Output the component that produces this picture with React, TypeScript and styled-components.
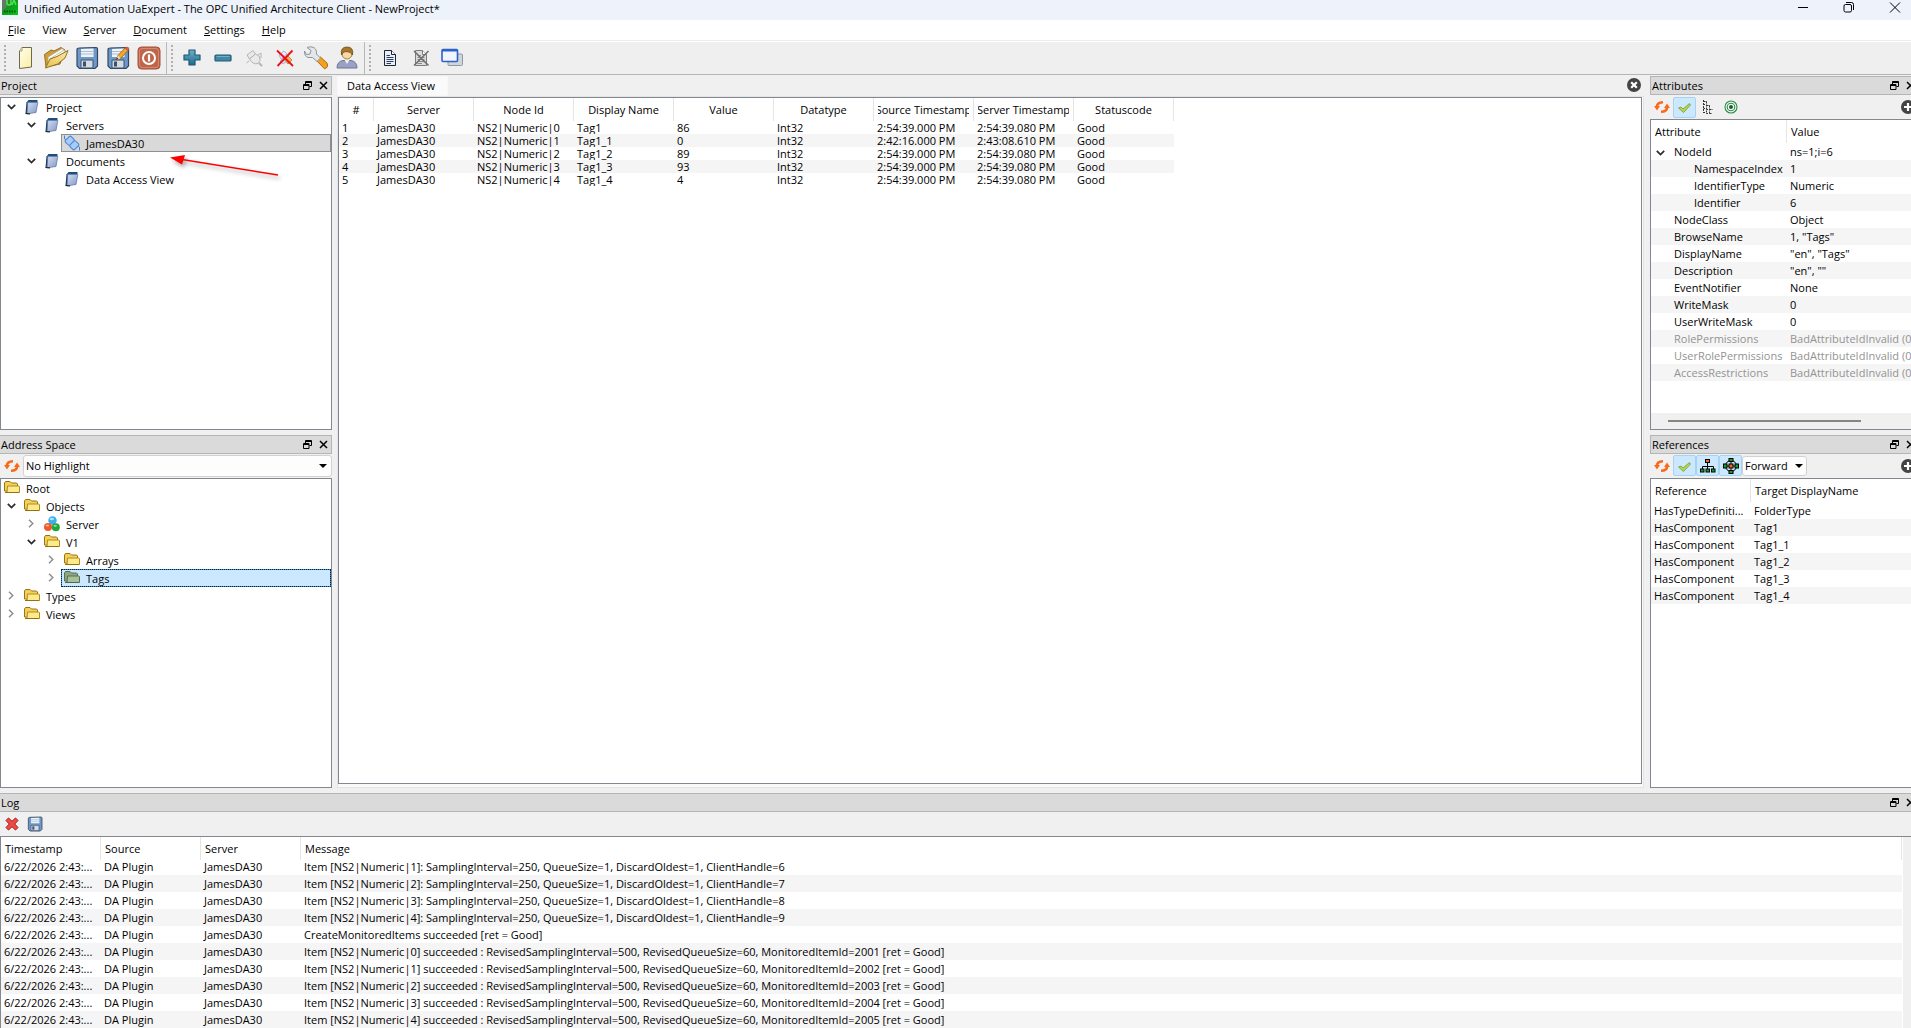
import React from "react";
import styled, { createGlobalStyle, css } from "styled-components";

const FONT = '"Open Sans", "Noto Sans", "Liberation Sans", sans-serif';
const FRAME = "#828790";

const GlobalStyle = createGlobalStyle`
  *, *::before, *::after { box-sizing: border-box; }
  body { margin: 0; background: #f0f0f0; }
  body, button, select, table { font-family: ${FONT}; font-size: 11px; line-height: 17px; color: #000; }
  button { margin: 0; padding: 0; border: 0; background: transparent; }
  svg { display: block; flex: none; }
`;

/* ---------- window shell ---------- */

const Window = styled.div`
  position: relative;
  display: flex;
  flex-direction: column;
  height: 100vh;
  overflow: hidden;
`;

/* The window is wider than the visible screen by a few pixels on the right. */
const Surface = styled.div`
  display: flex;
  flex-direction: column;
  flex: 1;
  min-height: 0;
  margin-right: -10px;
`;

const TitleBar = styled.header`
  display: flex;
  flex: none;
  height: 20px;
  padding: 0 3px 0 2px;
  background: #eef3fb;
`;

const WindowTitle = styled.h1`
  flex: 1;
  margin: 0 0 0 6px;
  font-size: 11px;
  line-height: 17px;
  font-weight: 400;
`;

const WindowButton = styled.button`
  display: flex;
  justify-content: center;
  width: 46px;
  height: 20px;
`;

const MenuBar = styled.nav`
  display: flex;
  flex: none;
  height: 21px;
  background: #fff;
  border-bottom: 1px solid #ececec;
`;

const MenuButton = styled.button`
  padding: 0 9px 0 8px;
  line-height: 20px;
`;

const Toolbars = styled.div`
  display: flex;
  flex: none;
  height: 34px;
  background: #efefef;
  border-top: 1px solid #fff;
  border-bottom: 1px solid #b5b5b5;
`;

const ToolGroup = styled.div<{ $last?: boolean }>`
  display: flex;
  align-items: center;
  padding: 0 2px 0 4px;
  border-right: ${(p) => (p.$last ? "0" : "1px solid #b9b9b9")};
`;

const Grip = styled.span`
  width: 5px;
  height: 26px;
  background: radial-gradient(circle at 1px 1px, #b0b0b0 1px, transparent 1px) 0 0 / 5px 4px repeat-y;
`;

const ToolButton = styled.button`
  display: flex;
  align-items: center;
  justify-content: center;
  width: 31px;
  height: 30px;
`;

const Workspace = styled.main`
  display: grid;
  grid-template-columns: 332px minmax(0, 1fr) 271px;
  flex: 1;
  min-height: 0;
  padding: 1px 0 5px;
`;

/* ---------- dock panels ---------- */

const DockColumn = styled.div`
  display: grid;
  grid-template-rows: minmax(0, 1fr) minmax(0, 1fr);
  gap: 5px;
  min-height: 0;
`;

const Panel = styled.section`
  display: flex;
  flex-direction: column;
  min-height: 0;
  min-width: 0;
`;

const PanelHeader = styled.div<{ $edge?: boolean; $boxed?: boolean }>`
  display: flex;
  align-items: center;
  flex: none;
  gap: 4px;
  height: 19px;
  padding: 0 ${(p) => (p.$edge ? 4 : 2)}px 0 1px;
  background: #dadada;
  border: 1px solid #b5b5b5;
  border-left-width: ${(p) => (p.$boxed ? 1 : 0)}px;
`;

const PanelTitle = styled.h2`
  flex: 1;
  margin: 0;
  font-size: 11px;
  line-height: 17px;
  font-weight: 400;
`;

const PanelButton = styled.button`
  display: flex;
  align-items: center;
  justify-content: center;
  width: 12px;
  height: 12px;
`;

const PanelTools = styled.div`
  display: flex;
  align-items: center;
  flex: none;
  height: 24px;
`;

const Frame = styled.div<{ $gap?: boolean }>`
  display: flex;
  flex-direction: column;
  flex: 1;
  min-height: 0;
  margin-top: ${(p) => (p.$gap ? "2px" : "0")};
  overflow: hidden;
  background: #fff;
  border: 1px solid ${FRAME};
`;

const Toggle = styled.button<{ $on?: boolean }>`
  display: flex;
  align-items: center;
  justify-content: center;
  width: 23px;
  height: 21px;
  border-radius: 2px;
  ${(p) => p.$on && css`
    background: #cce8ff;
    border: 1px solid #a6d2f5;
  `}
`;

const Spacer = styled.span`
  flex: 1;
`;

const RoundButton = styled.button`
  width: 14px;
  height: 14px;
  margin-right: 6px;
`;

const Picker = styled.label<{ $grow?: boolean }>`
  position: relative;
  display: flex;
  flex: ${(p) => (p.$grow ? "1" : "none")};
  width: ${(p) => (p.$grow ? "auto" : "65px")};
  height: ${(p) => (p.$grow ? "22px" : "20px")};
`;

const PickerSelect = styled.select`
  appearance: none;
  width: 100%;
  height: 100%;
  padding: 0 14px 0 2px;
  background: #fdfdfd;
  border: 1px solid #d2d2d2;
  border-radius: 3px;
`;

const PickerArrow = styled.span<{ $inset: number }>`
  position: absolute;
  top: 50%;
  right: ${(p) => p.$inset}px;
  margin-top: -2px;
  border: 4px solid transparent;
  border-top-color: #000;
  border-bottom: 0;
  pointer-events: none;
`;

/* ---------- trees ---------- */

const Tree = styled.ul`
  margin: 0;
  padding: 0;
  list-style: none;
`;

const TreeRow = styled.li<{ $indent: number }>`
  display: flex;
  height: 18px;
  padding-left: ${(p) => p.$indent}px;
`;

const Expander = styled.button`
  display: flex;
  align-items: center;
  justify-content: center;
  width: 20px;
  height: 18px;
`;

const TreeLabel = styled.span<{ $state?: "active" | "inactive" }>`
  display: flex;
  align-items: center;
  flex: 1;
  gap: 6px;
  padding-left: 2px;
  border: 1px solid transparent;
  ${(p) => p.$state === "inactive" && css`
    background: #d9d9d9;
    border-color: #8e8f93;
  `}
  ${(p) => p.$state === "active" && css`
    background: linear-gradient(#cce8ff, #cce8ff) padding-box, #2a8fe0 border-box;
    border: 1px dotted #10202e;
  `}
`;

const TreeText = styled.span`
  padding-top: 1px;
  line-height: 15px;
`;

/* ---------- tables ---------- */

const Sheet = styled.table<{ $width?: number }>`
  width: ${(p) => (p.$width ? `${p.$width}px` : "100%")};
  table-layout: fixed;
  border-collapse: separate;
  border-spacing: 0;
`;

const Column = styled.col<{ $w?: number }>`
  width: ${(p) => (p.$w ? `${p.$w}px` : "auto")};
`;

const Head = styled.th<{ $center?: boolean; $bare?: boolean }>`
  height: 23px;
  padding: 0 4px;
  font-weight: 400;
  text-align: ${(p) => (p.$center ? "center" : "left")};
  white-space: nowrap;
  border-right: ${(p) => (p.$bare ? "0" : "1px solid #e5e5e5")};
`;

const ClippedHead = styled.span`
  display: flex;
  justify-content: center;
  overflow: hidden;
`;

const Row = styled.tr<{ $h: number; $muted?: boolean }>`
  height: ${(p) => p.$h}px;
  color: ${(p) => (p.$muted ? "#939393" : "#000")};
  line-height: ${(p) => p.$h}px;
  &:nth-child(even) { background: #f5f5f5; }
`;

const Cell = styled.td<{ $inset?: number }>`
  height: inherit;
  padding: 0 0 0 ${(p) => p.$inset ?? 3}px;
  overflow: hidden;
  white-space: nowrap;
`;

const InlineExpander = styled.button`
  display: inline-flex;
  width: 18px;
  vertical-align: middle;
`;

const ScrollTrack = styled.div`
  flex: none;
  height: 16px;
  margin-top: auto;
  padding: 7px 59px 0 17px;
  background: #f0f0f0;
`;

const ScrollThumb = styled.div`
  height: 2px;
  background: #868686;
`;

/* ---------- document area ---------- */

const Documents = styled.section`
  display: flex;
  flex-direction: column;
  min-width: 0;
  min-height: 0;
  padding: 0 6px 0 5px;
`;

const TabStrip = styled.div`
  display: flex;
  align-items: center;
  justify-content: space-between;
  flex: none;
  height: 20px;
  padding-right: 3px;
`;

const Tab = styled.button`
  height: 20px;
  padding: 0 12px 2px 9px;
  background: #fafafa;
  border: 1px solid #f7f7f7;
`;

const CloseTab = styled.button`
  padding-bottom: 2px;
`;

const TabPage = styled.div`
  display: flex;
  flex: 1;
  min-height: 0;
  padding: 0 1px 3px 0;
  background: #f9f9f9;
  border: 1px solid #e4e4e4;
`;

/* ---------- log ---------- */

const LogPanel = styled.section`
  display: flex;
  flex-direction: column;
  flex: none;
  height: 235px;
`;

const LogBody = styled.div`
  display: flex;
  flex: 1;
  min-height: 0;
  background: #fff;
  border: 1px solid ${FRAME};
  border-width: 1px 0 0 1px;
`;

const LogScroll = styled.div`
  flex: 1;
  overflow: hidden;
`;

/* The list is scrolled slightly, so its first row is partly under the heading. */
const LogRow = styled(Row)`
  &:first-child { height: 15px; line-height: 13px; }
  &:first-child td { vertical-align: top; }
`;

const LogTrack = styled.div`
  display: flex;
  align-items: flex-end;
  justify-content: center;
  width: 18px;
  margin-left: 1px;
  padding-bottom: 17px;
  background: #f0f0f0;
`;

const LogThumb = styled.div`
  width: 2px;
  height: 18px;
  background: #868686;
`;

const Callout = styled.svg`
  position: absolute;
  left: 167px;
  top: 150px;
  filter: drop-shadow(2px 3px 2px rgba(0, 0, 0, 0.35));
  pointer-events: none;
`;

/* ---------- icons ---------- */

const AppIcon = () => (
  <svg width="16" height="15" viewBox="0 0 16 15">
    <defs>
      <linearGradient id="appGreen" x1="0" y1="0" x2="1" y2="1">
        <stop offset="0" stopColor="#5d6b5d" />
        <stop offset="0.45" stopColor="#0f9a1c" />
        <stop offset="1" stopColor="#04c814" />
      </linearGradient>
    </defs>
    <rect width="16" height="15" fill="url(#appGreen)" />
    <path d="M0 0H5V7L0 11Z" fill="#6f7a70" opacity="0.7" />
    <path d="M5 0V3Q5 5 7 5T9 3V0M10 5L12 0L14 5" stroke="#4bea57" strokeWidth="1.4" fill="none" />
    <path d="M2 11.500H14" stroke="#055a0c" strokeWidth="2" strokeDasharray="1.500 1" />
  </svg>
);

const MinimizeIcon = () => (
  <svg width="12" height="15" viewBox="0 0 12 15"><path d="M1 7.500H11" stroke="#000" /></svg>
);
const RestoreIcon = () => (
  <svg width="12" height="15" viewBox="0 0 12 15" fill="none" stroke="#000">
    <rect x="1" y="4.500" width="7.500" height="7.500" rx="1.500" />
    <path d="M3 2.500H8.500Q10.500 2.500 10.500 4.500V10" />
  </svg>
);
const CloseWindowIcon = () => (
  <svg width="12" height="15" viewBox="0 0 12 15"><path d="M1 2.500L11 12.500M11 2.500L1 12.500" stroke="#000" /></svg>
);

const NewIcon = () => (
  <svg width="24" height="24" viewBox="0 0 24 24">
    <defs>
      <linearGradient id="paper" x1="0" y1="0" x2="1" y2="1">
        <stop offset="0" stopColor="#fffef0" />
        <stop offset="1" stopColor="#fbeea0" />
      </linearGradient>
    </defs>
    <path d="M9 1.500H18.500V21L6.500 22.500V5Z" fill="url(#paper)" stroke="#6f6a4a" />
    <path d="M9 1.500V5H6.500" fill="#fff" stroke="#a39a62" />
  </svg>
);

const OpenIcon = () => (
  <svg width="26" height="24" viewBox="0 0 26 24">
    <defs>
      <linearGradient id="flap" x1="0" y1="1" x2="1" y2="0">
        <stop offset="0" stopColor="#e9c250" />
        <stop offset="1" stopColor="#fbe9a4" />
      </linearGradient>
    </defs>
    <path d="M1.500 8.500L8 4L11 5L18 1.500L22 4L17 18L3 21Z" fill="#cf9f33" stroke="#94701f" />
    <path d="M5 11L19 2.500L22.500 5L12 17L5 19Z" fill="#fdfdf8" stroke="#a8a08a" strokeWidth="0.800" />
    <path d="M6 13.500L21 4" stroke="#b9b4a0" strokeWidth="0.800" />
    <path d="M2.500 22L7 13L14 10.500L25 4.500L22 12L14.500 18Z" fill="url(#flap)" stroke="#94701f" />
  </svg>
);

const Disk = ({ size }: { size: number }) => (
  <svg width={size} height={size} viewBox="0 0 24 24">
    <path d="M2 4Q2 2 4 2L21 1.500Q22.500 1.500 22.500 3V20L20 22.500H4.500L2 20Z" fill="#6f98ca" stroke="#34465f" strokeWidth="1.200" />
    <path d="M6 3L18.500 2.600V11H6Z" fill="#eef3f8" />
    <path d="M6 5.500H18.500M6 8H18.500" stroke="#aebccb" />
    <path d="M6 14H18V22H6Z" fill="#d5dbe2" stroke="#38506f" />
    <path d="M8 15.500H11V20.500H8Z" fill="#39516e" />
  </svg>
);

const SaveAsIcon = () => (
  <svg width="24" height="24" viewBox="0 0 24 24">
    <path d="M2 4Q2 2 4 2L21 1.500Q22.500 1.500 22.500 3V20L20 22.500H4.500L2 20Z" fill="#6f98ca" stroke="#34465f" strokeWidth="1.200" />
    <path d="M6 3L18.500 2.600V11H6Z" fill="#eef3f8" />
    <path d="M6 5.500H16M6 8H14" stroke="#aebccb" />
    <path d="M6 14H18V22H6Z" fill="#d5dbe2" stroke="#38506f" />
    <path d="M8 15.500H11V20.500H8Z" fill="#39516e" />
    <path d="M10 14L12 9.500L19 2L22 4.500L14.500 12.500Z" fill="#f4a82c" stroke="#8a5a12" strokeWidth="0.800" />
    <path d="M19 2L20.500 0.500L23.500 3L22 4.500Z" fill="#e2564e" />
    <path d="M10 14L12 9.500L14.500 12.500Z" fill="#f6dcae" />
    <path d="M10 14L11 11.600L12.400 12.900Z" fill="#222" />
  </svg>
);

const PowerIcon = () => (
  <svg width="24" height="24" viewBox="0 0 24 24">
    <rect x="1" y="1" width="22" height="22" rx="3.500" fill="#c1654a" stroke="#a8523b" />
    <rect x="2.500" y="2.500" width="19" height="19" rx="2.500" fill="none" stroke="#d08a74" />
    <circle cx="12" cy="12" r="6" fill="none" stroke="#fff" strokeWidth="2" />
    <path d="M12 8.500V15.500" stroke="#fff" strokeWidth="2.200" />
  </svg>
);

const PlusIcon = () => (
  <svg width="20" height="20" viewBox="0 0 20 20">
    <defs>
      <linearGradient id="teal" x1="0" y1="0" x2="0" y2="1">
        <stop offset="0" stopColor="#6fb0c9" />
        <stop offset="1" stopColor="#22688a" />
      </linearGradient>
    </defs>
    <path d="M7 2H13V7H18V12H13V17H7V12H2V7H7Z" fill="url(#teal)" stroke="#1f5a78" strokeWidth="1.200" strokeLinejoin="round" />
  </svg>
);
const MinusIcon = () => (
  <svg width="20" height="20" viewBox="0 0 20 20">
    <rect x="2" y="7" width="16" height="6" rx="1" fill="#4586a3" stroke="#1f5a78" strokeWidth="1.200" />
    <path d="M3.500 8.500H16.500" stroke="#6fb0c9" />
  </svg>
);
const PlugIcon = () => (
  <svg width="20" height="20" viewBox="0 0 20 20" fill="#e9e9e9" stroke="#b4b4b4">
    <path d="M15 15L18 18" fill="none" strokeWidth="2" />
    <path d="M3 7L9 2.500L11.500 6L5.500 11Z" />
    <path d="M5.500 11L11.500 6L15.500 8.500Q17.500 13 14 15.500Q9 17 5.500 11Z" />
    <path d="M14 7L17 5V10M5 13L2.500 15" fill="none" />
  </svg>
);
const DisconnectIcon = () => (
  <svg width="20" height="20" viewBox="0 0 20 20">
    <path d="M4 7L9 3L12 6L6 11Z" fill="#e3e8fb" stroke="#aab4de" />
    <path d="M9 11L13 8L17 12L13 16Z" fill="#f4b25a" stroke="#c98a3a" />
    <path d="M5 13L8 10L11 14L8 16Z" fill="#d5dcf8" stroke="#aab4de" />
    <path d="M2 2.500L18 18M17.500 2.500L2.500 18" stroke="#f00f0f" strokeWidth="1.800" fill="none" />
  </svg>
);
const WrenchIcon = () => (
  <svg width="26" height="24" viewBox="0 0 26 24">
    <path d="M13.500 14.500L17.500 11L24 17Q26 21.500 21.500 22.800Z" fill="#f3a01f" stroke="#b06c10" />
    <path d="M4 1.500L8 4.500L7 8L3.500 8.500L1.500 5Q1 10 5 11.500L9.500 11.500L14 15.500L17.500 12L13.500 8Q14 2 9 1Q6 0.500 4 1.500Z" fill="#e3e6ea" stroke="#8d949d" />
  </svg>
);
const UserIcon = () => (
  <svg width="24" height="24" viewBox="0 0 24 24">
    <path d="M2 22Q2 15.500 8 14.500H16Q22 15.500 22 22Z" fill="#9aa2c4" stroke="#6d7598" />
    <path d="M9 13H15L12 18Z" fill="#f2f2f6" />
    <circle cx="12" cy="8" r="5" fill="#f6d9a8" stroke="#a9822f" />
    <path d="M6.500 9Q5 1 12 1Q19 1 17.500 9Q16 5.500 11 5.500Q8 5.500 6.500 9Z" fill="#a8752a" stroke="#6f4a12" strokeWidth="0.800" />
  </svg>
);
const DocumentIcon = ({ off }: { off?: boolean }) => (
  <svg width="18" height="20" viewBox="0 0 18 20">
    <path d="M3.500 2.500H10.500L14.500 6.500V17.500H3.500Z" fill={off ? "#dcdcdc" : "#e8effb"} stroke={off ? "#7c7c7c" : "#1d2533"} />
    <path d="M10.500 2.500V6.500H14.500" fill="#fff" stroke={off ? "#7c7c7c" : "#1d2533"} />
    <path d="M5.500 7.500H9M5.500 9.500H12.500M5.500 11.500H12.500M5.500 13.500H12.500M5.500 15.500H10" stroke={off ? "#8b8b8b" : "#2f3f58"} />
    {off && <path d="M2 3L16.500 17.500M16.500 3L2 17.500" stroke="#6e6e6e" strokeWidth="1.500" />}
  </svg>
);
const CascadeIcon = () => (
  <svg width="24" height="22" viewBox="0 0 24 22">
    <rect x="8" y="7" width="14.500" height="11.500" rx="1" fill="#cfd4dd" stroke="#9098a6" />
    <rect x="2" y="2.500" width="15.500" height="12" rx="1" fill="#f0f4ff" stroke="#2d62c8" strokeWidth="1.600" />
    <path d="M2 3.500H17.500" stroke="#2d62c8" strokeWidth="2" />
  </svg>
);

const FloatIcon = () => (
  <svg width="9" height="9" viewBox="0 0 9 9" fill="none" stroke="#000">
    <path d="M2.500 3V0.500H8.500V5.500H6.500M2.500 1.500H8.500" />
    <path d="M0.500 3.500H6V8.500H0.500ZM0.500 4.500H6" />
  </svg>
);
const CloseIcon = () => (
  <svg width="9" height="9" viewBox="0 0 9 9"><path d="M1 1L8 8M8 1L1 8" stroke="#000" strokeWidth="1.500" /></svg>
);

const NotebookIcon = () => (
  <svg width="16" height="16" viewBox="0 0 16 16">
    <defs>
      <linearGradient id="cover" x1="0" y1="0" x2="1" y2="1">
        <stop offset="0" stopColor="#d4def2" />
        <stop offset="1" stopColor="#7f97c8" />
      </linearGradient>
    </defs>
    <path d="M2.500 3.500L4.500 1H13.500V3.500Z" fill="#1d4f7e" />
    <path d="M2.500 3L4 3.500V14L1.500 14.500Z" fill="#173c66" />
    <path d="M3.800 3.500H13.800L12 13.500L3 14.800Z" fill="url(#cover)" stroke="#5a6f99" strokeWidth="0.700" />
    <path d="M1.500 14.500L6 14.800" stroke="#222" strokeWidth="1.200" />
  </svg>
);
const ConnectedIcon = () => (
  <svg width="16" height="16" viewBox="0 0 16 16" fill="#a5ccfa" stroke="#4c80d2">
    <path d="M0.500 0.500V4L2.500 5.500M15.500 15.500V12L13.500 10.500" fill="none" />
    <g transform="rotate(45 8 8)">
      <rect x="1.500" y="4" width="6.500" height="8" rx="1.500" />
      <rect x="8" y="4" width="6.500" height="8" rx="1.500" />
    </g>
  </svg>
);
const FolderIcon = ({ tinted }: { tinted?: boolean }) => (
  <svg width="16" height="16" viewBox="0 0 16 16">
    <path d="M0.500 11V3L1.500 1.500H6L7.500 3H12.500L13.500 4V12Z" fill={tinted ? "#8fa585" : "#f3cf5c"} stroke={tinted ? "#56704f" : "#9a7412"} />
    <path d="M3.500 6H14.500Q15.500 6 15.500 7V12.500H3Z" fill={tinted ? "#a9bf9a" : "#fdea8c"} stroke={tinted ? "#56704f" : "#b58a18"} />
    <path d="M1 12.500H15" stroke={tinted ? "#4f684a" : "#94700f"} />
  </svg>
);
const SpheresIcon = () => (
  <svg width="16" height="16" viewBox="0 0 16 16">
    <circle cx="8.500" cy="4.500" r="4.200" fill="#39aef0" />
    <circle cx="4" cy="11" r="4" fill="#ec5a2c" />
    <circle cx="11.800" cy="11.300" r="4" fill="#1fa53a" />
    <ellipse cx="7.800" cy="3" rx="2.200" ry="1.300" fill="#a7e0ff" />
    <ellipse cx="3.400" cy="9.500" rx="1.800" ry="1.100" fill="#ffb08e" />
    <ellipse cx="11.200" cy="9.800" rx="1.800" ry="1.100" fill="#7fe08f" />
  </svg>
);
const ChevronDown = () => (
  <svg width="9" height="6" viewBox="0 0 9 6"><path d="M0.800 0.800L4.500 4.500L8.200 0.800" fill="none" stroke="#2b2b2b" strokeWidth="1.700" /></svg>
);
const ChevronRight = () => (
  <svg width="6" height="9" viewBox="0 0 6 9"><path d="M1 0.800L4.800 4.500L1 8.200" fill="none" stroke="#8f8f8f" strokeWidth="1.500" /></svg>
);
const RefreshIcon = () => (
  <svg width="16" height="14" viewBox="0 0 16 14">
    <path d="M2.800 7Q3 2.200 9 2.200" fill="none" stroke="#f9691c" strokeWidth="2.600" />
    <path d="M0 6H6L3 10.500Z" fill="#f9691c" />
    <path d="M13.200 7Q13 11.800 7 11.800" fill="none" stroke="#f9691c" strokeWidth="2.600" />
    <path d="M10 8H16L13 3.500Z" fill="#f9691c" />
  </svg>
);
const CheckIcon = () => (
  <svg width="15" height="14" viewBox="0 0 15 14">
    <path d="M1.500 8L4 7L6 9L12.500 3.500L13.500 5L6.500 12.500Z" fill="#b5d94c" stroke="#7ea23a" strokeWidth="0.900" />
  </svg>
);
const SubtreeIcon = () => (
  <svg width="12" height="15" viewBox="0 0 12 15" fill="none" stroke="#333">
    <path d="M1.500 0V13M1.500 1.500H5M4.500 1.500V14M4.500 5.500H8M7.500 5.500V14M7.500 9.500H11M1.500 4.500H3M1.500 8.500H3M1.500 12.500H3M4.500 9.500H6M4.500 13.500H6M7.500 13.500H10" strokeDasharray="2 1" />
  </svg>
);
const TargetIcon = () => (
  <svg width="14" height="14" viewBox="0 0 14 14">
    <circle cx="7" cy="7" r="6" fill="#f4fbf5" stroke="#2c8c46" strokeWidth="1.100" />
    <circle cx="7" cy="7" r="3.800" fill="none" stroke="#2c8c46" strokeWidth="1.100" />
    <circle cx="7" cy="7" r="2" fill="#14602a" />
  </svg>
);
const HierarchyIcon = () => (
  <svg width="16" height="14" viewBox="0 0 16 14" stroke="#000">
    <path d="M7.500 4V7M2.500 10V7.500H13.500V10M7.500 7V10" fill="none" />
    <rect x="5.500" y="0.500" width="4" height="3" fill="#f26522" />
    <rect x="0.500" y="10" width="3.500" height="3" fill="#12a12d" />
    <rect x="6" y="10" width="3.500" height="3" fill="#12a12d" />
    <rect x="11.500" y="10" width="3.500" height="3" fill="#12a12d" />
  </svg>
);
const StarIcon = () => (
  <svg width="16" height="16" viewBox="0 0 16 16" stroke="#000">
    <circle cx="8" cy="8" r="5.500" fill="none" />
    <path d="M8 2V14M2 8H14" />
    <rect x="6" y="0.500" width="4" height="3" fill="#12a12d" />
    <rect x="6" y="12.500" width="4" height="3" fill="#12a12d" />
    <rect x="0.500" y="6" width="3.500" height="4" fill="#12a12d" />
    <rect x="12" y="6" width="3.500" height="4" fill="#12a12d" />
    <rect x="6" y="6" width="4" height="4" fill="#f26522" />
  </svg>
);
const RoundIcon = ({ kind }: { kind: "plus" | "close" }) => (
  <svg width="14" height="14" viewBox="0 0 14 14">
    <circle cx="7" cy="7" r="7" fill="#444" />
    <path d={kind === "plus" ? "M7 3V11M3 7H11" : "M4.200 4.200L9.800 9.800M9.800 4.200L4.200 9.800"} stroke="#fff" strokeWidth="2.200" />
  </svg>
);
const DeleteIcon = () => (
  <svg width="14" height="14" viewBox="0 0 14 14">
    <path d="M3.500 1L7 4.300L10.500 1L13 3.500L9.700 7L13 10.500L10.500 13L7 9.700L3.500 13L1 10.500L4.300 7L1 3.500Z" fill="#ee4b46" stroke="#a31515" />
  </svg>
);

/* ---------- data ---------- */

const MENUS: [string, string][] = [
  ["F", "ile"], ["", "View"], ["S", "erver"], ["D", "ocument"], ["S", "ettings"], ["H", "elp"],
];

const TOOL_GROUPS: [string, React.ReactNode][][] = [
  [
    ["New", <NewIcon />], ["Open", <OpenIcon />], ["Save", <Disk size={24} />],
    ["Save as", <SaveAsIcon />], ["Exit", <PowerIcon />],
  ],
  [
    ["Add server", <PlusIcon />], ["Remove server", <MinusIcon />], ["Connect", <PlugIcon />],
    ["Disconnect", <DisconnectIcon />], ["Server properties", <WrenchIcon />], ["Change user", <UserIcon />],
  ],
  [
    ["Add document", <DocumentIcon />], ["Remove document", <DocumentIcon off />], ["Windows", <CascadeIcon />],
  ],
];

type TreeNode = {
  label: string;
  level: number;
  icon: React.ReactNode;
  open?: boolean;
  state?: "active" | "inactive";
};

const PROJECT: TreeNode[] = [
  { label: "Project", level: 1, icon: <NotebookIcon />, open: true },
  { label: "Servers", level: 2, icon: <NotebookIcon />, open: true },
  { label: "JamesDA30", level: 3, icon: <ConnectedIcon />, state: "inactive" },
  { label: "Documents", level: 2, icon: <NotebookIcon />, open: true },
  { label: "Data Access View", level: 3, icon: <NotebookIcon /> },
];

const ADDRESS: TreeNode[] = [
  { label: "Root", level: 0, icon: <FolderIcon /> },
  { label: "Objects", level: 1, icon: <FolderIcon />, open: true },
  { label: "Server", level: 2, icon: <SpheresIcon />, open: false },
  { label: "V1", level: 2, icon: <FolderIcon />, open: true },
  { label: "Arrays", level: 3, icon: <FolderIcon />, open: false },
  { label: "Tags", level: 3, icon: <FolderIcon tinted />, open: false, state: "active" },
  { label: "Types", level: 1, icon: <FolderIcon />, open: false },
  { label: "Views", level: 1, icon: <FolderIcon />, open: false },
];

const DATA_HEADS = ["#", "Server", "Node Id", "Display Name", "Value", "Datatype", "Source Timestamp", "Server Timestamp", "Statuscode"];
const DATA_ROWS = [
  ["Tag1", "86", "2:54:39.000 PM", "2:54:39.080 PM"],
  ["Tag1_1", "0", "2:42:16.000 PM", "2:43:08.610 PM"],
  ["Tag1_2", "89", "2:54:39.000 PM", "2:54:39.080 PM"],
  ["Tag1_3", "93", "2:54:39.000 PM", "2:54:39.080 PM"],
  ["Tag1_4", "4", "2:54:39.000 PM", "2:54:39.080 PM"],
].map(([name, value, source, server], i) => [
  String(i + 1), "JamesDA30", `NS2|Numeric|${i}`, name, value, "Int32", source, server, "Good",
]);

const BAD = "BadAttributeIdInvalid (0x80350000)";
const ATTRIBUTES: { name: string; value: string; kind?: "parent" | "child" | "muted" }[] = [
  { name: "NodeId", value: "ns=1;i=6", kind: "parent" },
  { name: "NamespaceIndex", value: "1", kind: "child" },
  { name: "IdentifierType", value: "Numeric", kind: "child" },
  { name: "Identifier", value: "6", kind: "child" },
  { name: "NodeClass", value: "Object" },
  { name: "BrowseName", value: '1, "Tags"' },
  { name: "DisplayName", value: '"en", "Tags"' },
  { name: "Description", value: '"en", ""' },
  { name: "EventNotifier", value: "None" },
  { name: "WriteMask", value: "0" },
  { name: "UserWriteMask", value: "0" },
  { name: "RolePermissions", value: BAD, kind: "muted" },
  { name: "UserRolePermissions", value: BAD, kind: "muted" },
  { name: "AccessRestrictions", value: BAD, kind: "muted" },
];

const REFERENCES = [
  ["HasTypeDefiniti...", "FolderType"],
  ["HasComponent", "Tag1"],
  ["HasComponent", "Tag1_1"],
  ["HasComponent", "Tag1_2"],
  ["HasComponent", "Tag1_3"],
  ["HasComponent", "Tag1_4"],
];

const LOG = [
  ...[1, 2, 3, 4].map((n) => `Item [NS2|Numeric|${n}]: SamplingInterval=250, QueueSize=1, DiscardOldest=1, ClientHandle=${n + 5}`),
  "CreateMonitoredItems succeeded [ret = Good]",
  ...[0, 1, 2, 3, 4].map(
    (n) => `Item [NS2|Numeric|${n}] succeeded : RevisedSamplingInterval=500, RevisedQueueSize=60, MonitoredItemId=${2001 + n} [ret = Good]`
  ),
];

/* ---------- parts ---------- */

const Header = ({ title, edge, boxed }: { title: string; edge?: boolean; boxed?: boolean }) => (
  <PanelHeader $edge={edge} $boxed={boxed}>
    <PanelTitle>{title}</PanelTitle>
    <PanelButton aria-label={`Float ${title}`}><FloatIcon /></PanelButton>
    <PanelButton aria-label={`Close ${title}`}><CloseIcon /></PanelButton>
  </PanelHeader>
);

const TreeView = ({ nodes, name }: { nodes: TreeNode[]; name: string }) => (
  <Tree role="tree" aria-label={name}>
    {nodes.map((n) => {
      const hasArrow = n.open !== undefined;
      return (
        <TreeRow key={n.label} role="treeitem" $indent={hasArrow ? (n.level - 1) * 20 : n.level * 20}>
          {hasArrow && (
            <Expander aria-label={`Toggle ${n.label}`}>{n.open ? <ChevronDown /> : <ChevronRight />}</Expander>
          )}
          <TreeLabel $state={n.state}>{n.icon}<TreeText>{n.label}</TreeText></TreeLabel>
        </TreeRow>
      );
    })}
  </Tree>
);

export default function App() {
  return (
    <Window>
      <GlobalStyle />
      <Surface>
        <TitleBar>
          <AppIcon />
          <WindowTitle>Unified Automation UaExpert - The OPC Unified Architecture Client - NewProject*</WindowTitle>
          <WindowButton aria-label="Minimize"><MinimizeIcon /></WindowButton>
          <WindowButton aria-label="Restore"><RestoreIcon /></WindowButton>
          <WindowButton aria-label="Close"><CloseWindowIcon /></WindowButton>
        </TitleBar>
        <MenuBar>
          {MENUS.map(([key, rest]) => (
            <MenuButton key={rest}>{key && <u>{key}</u>}{rest}</MenuButton>
          ))}
        </MenuBar>
        <Toolbars>
          {TOOL_GROUPS.map((group, i) => (
            <ToolGroup key={i} $last={i === 2}>
              <Grip />
              {group.map(([label, icon]) => (
                <ToolButton key={label} aria-label={label}>{icon}</ToolButton>
              ))}
            </ToolGroup>
          ))}
        </Toolbars>

        <Workspace>
          <DockColumn>
            <Panel>
              <Header title="Project" />
              <Frame $gap><TreeView nodes={PROJECT} name="Project" /></Frame>
            </Panel>
            <Panel>
              <Header title="Address Space" />
              <PanelTools>
                <Toggle aria-label="Refresh address space"><RefreshIcon /></Toggle>
                <Picker $grow>
                  <PickerSelect aria-label="Highlight"><option>No Highlight</option></PickerSelect>
                  <PickerArrow $inset={5} />
                </Picker>
              </PanelTools>
              <Frame><TreeView nodes={ADDRESS} name="Address Space" /></Frame>
            </Panel>
          </DockColumn>

          <Documents>
            <TabStrip>
              <Tab>Data Access View</Tab>
              <CloseTab aria-label="Close document"><RoundIcon kind="close" /></CloseTab>
            </TabStrip>
            <TabPage>
              <Frame>
                <Sheet $width={835}>
                  <colgroup>{DATA_HEADS.map((h, i) => <Column key={h} $w={i === 0 ? 35 : 100} />)}</colgroup>
                  <thead>
                    <tr>{DATA_HEADS.map((h) => <Head key={h} $center><ClippedHead>{h}</ClippedHead></Head>)}</tr>
                  </thead>
                  <tbody>
                    {DATA_ROWS.map((r) => (
                      <Row key={r[0]} $h={13}>{r.map((c, i) => <Cell key={i}>{c}</Cell>)}</Row>
                    ))}
                  </tbody>
                </Sheet>
              </Frame>
            </TabPage>
          </Documents>

          <DockColumn>
            <Panel>
              <Header title="Attributes" edge boxed />
              <PanelTools>
                <Toggle aria-label="Refresh attributes"><RefreshIcon /></Toggle>
                <Toggle $on aria-label="Auto update"><CheckIcon /></Toggle>
                <Toggle aria-label="Expand"><SubtreeIcon /></Toggle>
                <Toggle aria-label="Monitor"><TargetIcon /></Toggle>
                <Spacer />
                <RoundButton aria-label="Add attribute"><RoundIcon kind="plus" /></RoundButton>
              </PanelTools>
              <Frame>
                <Sheet>
                  <colgroup><Column $w={136} /><Column /></colgroup>
                  <thead><tr><Head>Attribute</Head><Head $bare>Value</Head></tr></thead>
                  <tbody>
                    {ATTRIBUTES.map((a) => (
                      <Row key={a.name} $h={17} $muted={a.kind === "muted"}>
                        <Cell $inset={a.kind === "parent" ? 5 : a.kind === "child" ? 43 : 23}>
                          {a.kind === "parent" && <InlineExpander aria-label="Toggle NodeId"><ChevronDown /></InlineExpander>}
                          {a.name}
                        </Cell>
                        <Cell>{a.value}</Cell>
                      </Row>
                    ))}
                  </tbody>
                </Sheet>
                <ScrollTrack><ScrollThumb /></ScrollTrack>
              </Frame>
            </Panel>
            <Panel>
              <Header title="References" edge boxed />
              <PanelTools>
                <Toggle aria-label="Refresh references"><RefreshIcon /></Toggle>
                <Toggle $on aria-label="Auto update references"><CheckIcon /></Toggle>
                <Toggle $on aria-label="Hierarchical"><HierarchyIcon /></Toggle>
                <Toggle $on aria-label="Non hierarchical"><StarIcon /></Toggle>
                <Picker>
                  <PickerSelect aria-label="Direction"><option>Forward</option></PickerSelect>
                  <PickerArrow $inset={4} />
                </Picker>
                <Spacer />
                <RoundButton aria-label="Add reference"><RoundIcon kind="plus" /></RoundButton>
              </PanelTools>
              <Frame>
                <Sheet>
                  <colgroup><Column $w={100} /><Column /></colgroup>
                  <thead><tr><Head>Reference</Head><Head $bare>Target DisplayName</Head></tr></thead>
                  <tbody>
                    {REFERENCES.map(([ref, target]) => (
                      <Row key={target} $h={17}><Cell>{ref}</Cell><Cell>{target}</Cell></Row>
                    ))}
                  </tbody>
                </Sheet>
              </Frame>
            </Panel>
          </DockColumn>
        </Workspace>

        <LogPanel>
          <Header title="Log" edge />
          <PanelTools>
            <Toggle aria-label="Clear log"><DeleteIcon /></Toggle>
            <Toggle aria-label="Save log"><Disk size={16} /></Toggle>
          </PanelTools>
          <LogBody>
            <LogScroll>
              <Sheet>
                <colgroup><Column $w={100} /><Column $w={100} /><Column $w={100} /><Column /></colgroup>
                <thead><tr><Head>Timestamp</Head><Head>Source</Head><Head>Server</Head><Head>Message</Head></tr></thead>
                <tbody>
                  {LOG.map((m) => (
                    <LogRow key={m} $h={17}>
                      <Cell>6/22/2026 2:43:...</Cell><Cell>DA Plugin</Cell><Cell>JamesDA30</Cell><Cell>{m}</Cell>
                    </LogRow>
                  ))}
                </tbody>
              </Sheet>
            </LogScroll>
            <LogTrack><LogThumb /></LogTrack>
          </LogBody>
        </LogPanel>
      </Surface>

      <Callout width="118" height="32" viewBox="0 0 118 32" aria-hidden="true">
        <path d="M12 9L111 25" stroke="#f00" strokeWidth="1.500" />
        <path d="M3 7.500L18 5L15 14.500Z" fill="#f00" />
      </Callout>
    </Window>
  );
}
